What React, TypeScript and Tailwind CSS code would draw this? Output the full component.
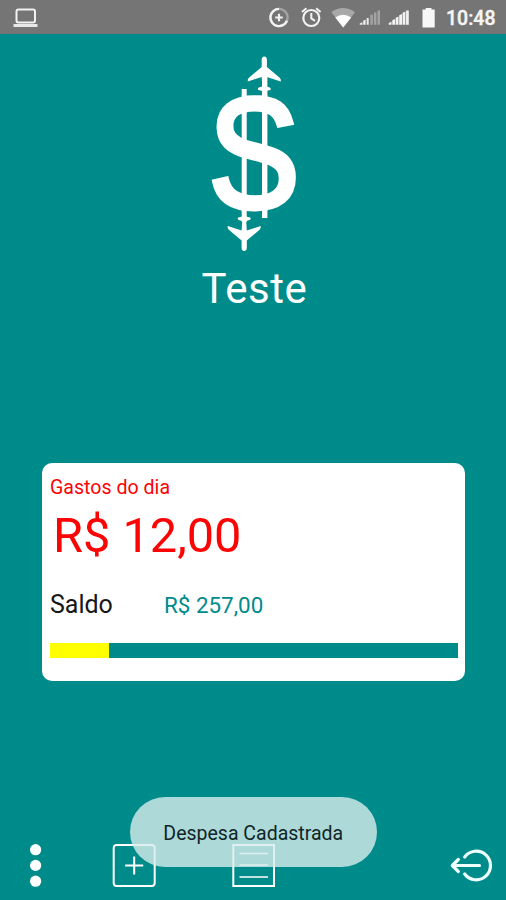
import React from "react";

function StatusBar() {
  return (
    <header className="h-[34px] w-full bg-[#757575] text-[#f2f2f2]">
      <svg className="block h-[34px] w-[506px]" viewBox="0 0 506 34" fill="none">
        <rect x="16.5" y="9.5" width="18.5" height="13" rx="2" stroke="#f2f2f2" strokeWidth="2" />
        <path d="M13.5 24h24v3h-24z" fill="#e8e8e8" />
        <circle cx="279" cy="17.5" r="8.600" stroke="#a5a5a5" strokeWidth="2.400" />
        <path d="M279 8.900a8.600 8.600 0 1 0 8 11.800" stroke="#f2f2f2" strokeWidth="2.400" />
        <path d="M279 13.700v7.600M275.200 17.500h7.600" stroke="#f2f2f2" strokeWidth="2.200" />
        <circle cx="311.300" cy="18" r="8" stroke="#f2f2f2" strokeWidth="2.200" />
        <path d="M311.300 13v5.400l3.700 2.400M302 12l4.400-3.800M320.600 12l-4.400-3.800" stroke="#f2f2f2" strokeWidth="2" />
        <path d="M331.300 12.200Q343 4 355 12.200L343.200 27.500z" fill="#a8a8a8" />
        <path d="M335.300 17.400Q343.200 12 351.200 17.400L343.200 27.500z" fill="#fff" />
        <path d="M370.300 14.800h2.500v9.900h-2.500zM373.900 12.500h2.500v12.200h-2.500zM377.500 10.400h2.500v14.300h-2.500z" fill="#a3a3a3" />
        <path d="M359.700 24.700v-1.300l2.700-1.200v2.500zM363.200 20.800l2.400-1.300v5.200h-2.400zM366.700 18h2v6.700h-2z" fill="#ededed" />
        <path d="M388.800 24.700v-1.600l2.700-1.300v2.900zM392.300 20.300l2.800-1.300v5.700h-2.800zM395.700 17.800l2.800-1.300v8.200h-2.800zM399.200 15.200l2.800-1.300v10.800h-2.800zM402.600 12.800l2.800-1.300v13.200h-2.800zM406.100 10.400h2.700v14.300h-2.700z" fill="#f2f2f2" />
        <path d="M422.500 9.500h3.200V8h5.800v1.500h3.200v18h-12.200z" fill="#f7f7f7" />
        <text x="446" y="25.200" textLength="49.500" lengthAdjust="spacingAndGlyphs" className="font-[Roboto,sans-serif] text-[19.500px] font-medium" fill="#f5f5f5" stroke="#f5f5f5" strokeWidth=".4">10:48</text>
      </svg>
    </header>
  );
}

function Logo() {
  return (
    <svg className="block h-[200px] w-[100px]" viewBox="203 54 100 200" fill="#fff">
      <text
        transform="translate(208.100 207.300) scale(.89 1)"
        className="font-['Liberation_Sans',Arial,sans-serif] text-[155px]"
        stroke="#fff"
        strokeWidth="4.800"
      >
        S
      </text>
      <path d="M241.700 89h5v133h-5zM262 72h5.400v146H262z" />
      <path d="M241.700 95.500h25.700v6h-25.700zM241.700 206h25.700v5h-25.700z" />
      <Plane />
      <g transform="rotate(180 254.250 153.750)">
        <Plane />
      </g>
    </svg>
  );
}

function Plane() {
  return (
    <path d="M264.300 56.500c-1.800 0-2.600 1.500-2.600 3v7.500l-12.500 10.500c-1.400 1.200-1.600 2.500-1.300 4l13.800-4.500.6 9.500-3.500 1c-1.400.9-1.200 2.200-.4 2.600l4 .9h3.800l4-.9c.8-.4 1-1.700-.4-2.600l-3.500-1 .6-9.500 13.800 4.500c.3-1.500.1-2.800-1.300-4l-12.500-10.500v-7.500c0-1.500-.8-3-2.600-3z" />
  );
}

function ExpenseCard() {
  return (
    <section className="mx-[42px] mt-[149px] h-[218px] w-[422.500px] rounded-[10px] bg-white px-2 pt-[13px]">
      <h2 className="h-[23px] text-[19.600px] leading-[23px] whitespace-nowrap text-[#fb0404]">Gastos do dia</h2>
      <p className="mt-[8px] ml-[3px] h-[58px] text-[48.700px] leading-[58px] whitespace-nowrap text-[#fb0404]">R$ 12,00</p>
      <div className="mt-[26px] flex h-7 items-center">
        <span className="w-[114px] text-[25px] leading-7 text-[#171717]">Saldo</span>
        <span className="text-[22.400px] leading-[26px] text-[#008b8b]">R$ 257,00</span>
      </div>
      <div className="mt-[24px] flex h-[15px] w-[407.500px] bg-[#008b8b]">
        <div className="w-[59px] bg-[#ffff00]" />
      </div>
    </section>
  );
}

function BottomBar() {
  return (
    <nav className="relative mt-[116px] h-[103px] w-full">
      <svg className="block h-[103px] w-[506px]" viewBox="0 797 506 103" fill="none">
        <g fill="#fff">
          <circle cx="35.600" cy="849.700" r="5.600" />
          <circle cx="35.600" cy="865.400" r="5.600" />
          <circle cx="35.600" cy="881.200" r="5.600" />
        </g>
        <g stroke="#fff" strokeWidth="2">
          <rect x="113.700" y="845" width="41" height="41" rx="3" />
          <path d="M134.200 856.500v18M125.200 865.500h18" />
          <path d="M233.300 845h40.700v41h-40.700z" />
          <path d="M239.500 853.500h28.500M239.500 865h28.500M239.500 877h28.500" strokeWidth="1.500" />
        </g>
        <g stroke="#edffff" strokeWidth="3.200" strokeLinecap="round" strokeLinejoin="round">
          <path d="M464.700 857a14.300 14.300 0 1 1 0 17" />
          <path d="M453 865.500h26.500M458.300 859.500l-6 6 6 6" />
        </g>
      </svg>
      <div className="absolute top-0 left-[129.500px] flex h-[70px] w-[247.500px] items-center justify-center rounded-[35px] bg-[#d8ecec]/80 pt-[4px] text-[19.500px] whitespace-nowrap text-[#102526]">
        Despesa Cadastrada
      </div>
    </nav>
  );
}

export default function App() {
  return (
    <main className="h-[900px] w-[506px] overflow-hidden bg-[#008b8b] font-[Roboto,sans-serif]">
      <StatusBar />
      <div className="flex flex-col items-center pt-5">
        <Logo />
        <h1 className="mt-[10px] ml-[3px] h-[50px] text-[42px] leading-[50px] tracking-[0.600px] text-white">Teste</h1>
      </div>
      <ExpenseCard />
      <BottomBar />
    </main>
  );
}
